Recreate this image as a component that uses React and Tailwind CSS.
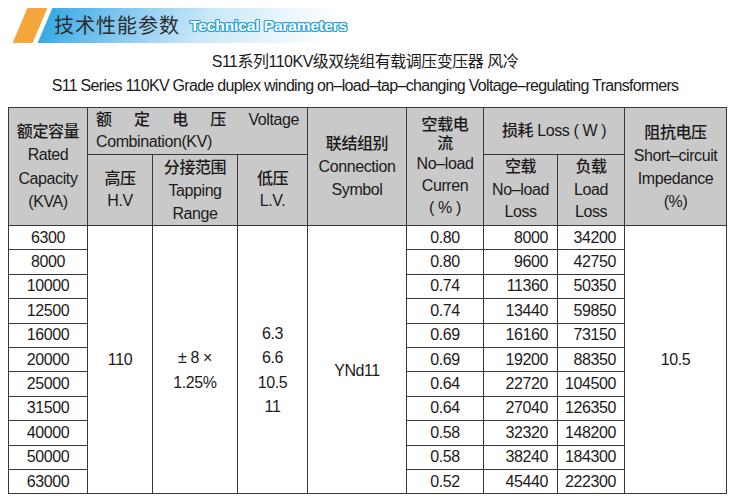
import React from 'react';

const rows = [
  ['6300', '0.80', '8000', '34200'],
  ['8000', '0.80', '9600', '42750'],
  ['10000', '0.74', '11360', '50350'],
  ['12500', '0.74', '13440', '59850'],
  ['16000', '0.69', '16160', '73150'],
  ['20000', '0.69', '19200', '88350'],
  ['25000', '0.64', '22720', '104500'],
  ['31500', '0.64', '27040', '126350'],
  ['40000', '0.58', '32320', '148200'],
  ['50000', '0.58', '38240', '184300'],
  ['63000', '0.52', '45440', '222300'],
];

const cell = 'border border-[#3d3636] p-0';
const head = `${cell} bg-[#c9c9c9] text-center align-middle`;
const zh = 'font-medium';

function Banner() {
  return (
    <div className="flex h-[35px] pl-[20px]">
      <div className="w-[20px] h-full bg-[#f4a63a] -skew-x-[23deg]" />
      <div className="ml-[5px] w-[290px] h-full -skew-x-[23deg] bg-gradient-to-r from-[#35abe6] via-[#c9e8f8] via-55% to-white">
        <div className="skew-x-[23deg] h-full flex items-center whitespace-nowrap pl-[9px]">
          <span className="text-[20px] tracking-[1px] text-[#2d2d2d] leading-none">技术性能参数</span>
          <span className="ml-[10px] text-[15.5px] font-bold text-white leading-none tracking-[-0.1px] [text-shadow:1px_0_#2ba4e0,-1px_0_#2ba4e0,0_1px_#2ba4e0,0_-1px_#2ba4e0,1px_1px_#2ba4e0,-1px_-1px_#2ba4e0,1px_-1px_#2ba4e0,-1px_1px_#2ba4e0]">
            Technical Parameters
          </span>
        </div>
      </div>
    </div>
  );
}

function SpecTable() {
  return (
    <table className="table-fixed border-collapse w-[718px] text-[16px] tracking-[-0.4px] text-[#1c1a1a]">
      <colgroup>
        <col className="w-[79px]" />
        <col className="w-[65px]" />
        <col className="w-[85px]" />
        <col className="w-[70px]" />
        <col className="w-[99px]" />
        <col className="w-[77px]" />
        <col className="w-[74px]" />
        <col className="w-[67px]" />
        <col className="w-[102px]" />
      </colgroup>
      <thead>
        <tr className="h-[47px]">
          <td rowSpan={2} className={`${head} leading-[23.3px]`}>
            <div className={zh}>额定容量</div>
            <div>Rated</div>
            <div>Capacity</div>
            <div>(KVA)</div>
          </td>
          <td colSpan={3} className={`${head} text-left px-[8px] leading-[22.5px]`}>
            <div className="flex justify-between">
              <span className={zh}>额</span>
              <span className={zh}>定</span>
              <span className={zh}>电</span>
              <span className={zh}>压</span>
              <span>Voltage</span>
            </div>
            <div>Combination(KV)</div>
          </td>
          <td rowSpan={2} className={`${head} leading-[23px]`}>
            <div className={zh}>联结组别</div>
            <div>Connection</div>
            <div>Symbol</div>
          </td>
          <td rowSpan={2} className={`${head} leading-[22px]`}>
            <div className={`${zh} leading-[19px]`}>空载电</div>
            <div className={`${zh} leading-[19px]`}>流</div>
            <div>No–load</div>
            <div>Curren</div>
            <div>( % )</div>
          </td>
          <td colSpan={2} className={`${head} leading-[22px]`}>
            <span className={zh}>损耗</span> Loss ( W )
          </td>
          <td rowSpan={2} className={`${head} leading-[23px]`}>
            <div className={zh}>阻抗电压</div>
            <div>Short–circuit</div>
            <div>Impedance</div>
            <div>(%)</div>
          </td>
        </tr>
        <tr className="h-[71px]">
          <td className={`${head} leading-[22px]`}>
            <div className={zh}>高压</div>
            <div>H.V</div>
          </td>
          <td className={`${head} leading-[23px]`}>
            <div className={zh}>分接范围</div>
            <div>Tapping</div>
            <div>Range</div>
          </td>
          <td className={`${head} leading-[22px]`}>
            <div className={zh}>低压</div>
            <div>L.V.</div>
          </td>
          <td className={`${head} leading-[22.5px]`}>
            <div className={zh}>空载</div>
            <div>No–load</div>
            <div>Loss</div>
          </td>
          <td className={`${head} leading-[22.5px]`}>
            <div className={zh}>负载</div>
            <div>Load</div>
            <div>Loss</div>
          </td>
        </tr>
      </thead>
      <tbody>
        {rows.map((r, i) => (
          <tr key={r[0]} className="h-[24.4px] leading-[22px]">
            <td className={`${cell} text-center`}>{r[0]}</td>
            {i === 0 && (
              <>
                <td rowSpan={11} className={`${cell} text-center align-middle`}>110</td>
                <td rowSpan={11} className={`${cell} text-center align-middle pt-[22px] leading-[24.4px]`}>
                  <div>± 8 ×</div>
                  <div>1.25%</div>
                </td>
                <td rowSpan={11} className={`${cell} text-center align-middle pt-[22px] leading-[24.4px]`}>
                  <div>6.3</div>
                  <div>6.6</div>
                  <div>10.5</div>
                  <div>11</div>
                </td>
                <td rowSpan={11} className={`${cell} text-center align-middle pt-[22px]`}>YNd11</td>
              </>
            )}
            <td className={`${cell} text-center`}>{r[1]}</td>
            <td className={`${cell} text-right pr-[9px]`}>{r[2]}</td>
            <td className={`${cell} text-right pr-[8px]`}>{r[3]}</td>
            {i === 0 && (
              <td rowSpan={11} className={`${cell} text-center align-middle`}>10.5</td>
            )}
          </tr>
        ))}
      </tbody>
    </table>
  );
}

export default function App() {
  return (
    <div className="w-[730px] h-[499px] overflow-hidden bg-white pt-[8px] font-['Liberation_Sans','Noto_Sans_CJK_SC',sans-serif] text-[#1c1a1a]">
      <Banner />
      <div className="mt-[7px] text-center text-[16px] leading-[24px]">
        <div className="tracking-[-0.5px]">S11系列110KV级双绕组有载调压变压器 风冷</div>
        <div className="tracking-[-0.7px]">S11 Series 110KV Grade duplex winding on–load–tap–changing Voltage–regulating Transformers</div>
      </div>
      <div className="mt-[9px] mx-[8px]">
        <SpecTable />
      </div>
    </div>
  );
}
